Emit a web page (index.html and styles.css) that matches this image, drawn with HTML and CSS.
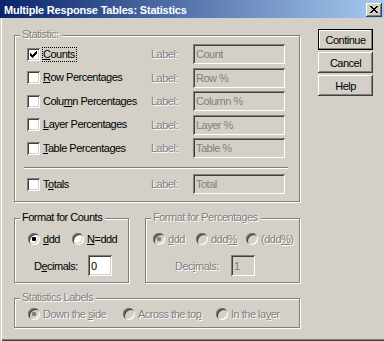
FILE: index.html
```html
<!DOCTYPE html>
<html>
<head>
<meta charset="utf-8">
<link rel="stylesheet" href="styles.css">
</head>
<body>
<div class="window">
  <div class="titlebar">
    <span class="title">Multiple Response Tables: Statistics</span>
    <span class="close"><svg width="8" height="7" viewBox="0 0 8 7" shape-rendering="crispEdges"><path d="M0 0h2v1H0zM6 0h2v1H6zM1 1h2v1H1zM5 1h2v1H5zM2 2h4v1H2zM3 3h2v1H3zM2 4h4v1H2zM1 5h2v1H1zM5 5h2v1H5zM0 6h2v1H0zM6 6h2v1H6z" fill="#000"/></svg></span>
  </div>
  <div class="client">
    <div class="left">
      <div class="group stat">
        <div class="legend dis">Statistic:</div>
        <div class="rows">
          <div class="row">
            <div class="check-cell"><span class="cb"><svg width="7" height="7" viewBox="0 0 7 7" shape-rendering="crispEdges"><path d="M6 0h1v1H6zM5 1h2v1H5zM0 2h1v1H0zM4 2h3v1H4zM0 3h2v1H0zM3 3h3v1H3zM0 4h5v1H0zM1 5h3v1H1zM2 6h1v1H2z" fill="#000"/></svg></span><span class="lbl focus"><u>C</u>ounts</span></div>
            <div class="dis">Label:</div>
            <div class="field">Count</div>
          </div>
          <div class="row">
            <div class="check-cell"><span class="cb"></span><span class="lbl"><u>R</u>ow Percentages</span></div>
            <div class="dis">Label:</div>
            <div class="field">Row %</div>
          </div>
          <div class="row">
            <div class="check-cell"><span class="cb"></span><span class="lbl">Colu<u>m</u>n Percentages</span></div>
            <div class="dis">Label:</div>
            <div class="field">Column %</div>
          </div>
          <div class="row">
            <div class="check-cell"><span class="cb"></span><span class="lbl"><u>L</u>ayer Percentages</span></div>
            <div class="dis">Label:</div>
            <div class="field">Layer %</div>
          </div>
          <div class="row">
            <div class="check-cell"><span class="cb"></span><span class="lbl"><u>T</u>able Percentages</span></div>
            <div class="dis">Label:</div>
            <div class="field">Table %</div>
          </div>
        </div>
        <div class="sep"></div>
        <div class="row totals">
          <div class="check-cell"><span class="cb"></span><span class="lbl">T<u>o</u>tals</span></div>
          <div class="dis">Label:</div>
          <div class="field">Total</div>
        </div>
      </div>

      <div class="formats">
        <div class="group counts">
          <div class="legend">Format for Counts</div>
          <div class="opts">
            <div class="opt w44"><span class="radio on"><span class="dot"></span></span><span><u>d</u>dd</span></div>
            <div class="opt"><span class="radio"></span><span><u>N</u>=ddd</span></div>
          </div>
          <div class="dec">
            <span class="dec-lbl w54">D<u>e</u>cimals:</span>
            <span class="edit">0</span>
          </div>
        </div>
        <div class="group pcts">
          <div class="legend dis">Format for Percentages</div>
          <div class="opts dis">
            <div class="opt w43"><span class="radio off"><span class="dot"></span></span><span><u>d</u>dd</span></div>
            <div class="opt w50"><span class="radio off"></span><span>ddd<u>%</u></span></div>
            <div class="opt"><span class="radio off"></span><span>(ddd<u>%</u>)</span></div>
          </div>
          <div class="dec dis">
            <span class="dec-lbl w56">Dec<u>i</u>mals:</span>
            <span class="edit disabled">1</span>
          </div>
        </div>
      </div>

      <div class="group labels">
        <div class="legend dis">Statistics Labels</div>
        <div class="opts dis">
          <div class="opt w95"><span class="radio off"><span class="dot"></span></span><span>Down the <u>s</u>ide</span></div>
          <div class="opt w93"><span class="radio off"></span><span>Across the to<u>p</u></span></div>
          <div class="opt"><span class="radio off"></span><span>In the la<u>y</u>er</span></div>
        </div>
      </div>
    </div>

    <div class="buttons">
      <div class="btn default">Continue</div>
      <div class="btn">Cancel</div>
      <div class="btn">Help</div>
    </div>
  </div>
</div>
</body>
</html>
```

FILE: styles.css
```css
* { box-sizing: border-box; margin: 0; padding: 0; }
body {
  margin: 0;
  background: #d4d0c8;
  font-family: "Liberation Sans", Arial, sans-serif;
  font-size: 11px;
  letter-spacing: -0.5px;
  color: #000;
}
.window {
  width: 384px;
  height: 341px;
  background: #d4d0c8;
  box-shadow: inset 1px 0 #d4d0c8, inset 2px 0 #fff, inset 0 -1px #404040, inset 0 -2px #808080;
  overflow: hidden;
}
.titlebar {
  height: 18px;
  display: flex;
  align-items: flex-start;
  justify-content: space-between;
  padding: 0 2px 0 4px;
  background: linear-gradient(to right, #0a246a, #a6caf0);
}
.title {
  color: #fff;
  font-weight: bold;
  letter-spacing: -0.2px;
  line-height: 13px;
  margin-top: 4px;
}
.close {
  width: 16px;
  height: 14px;
  margin-top: 3px;
  padding: 3px 0 0 4px;
  background: #d4d0c8;
  box-shadow: inset -1px -1px #404040, inset 1px 1px #fff, inset -2px -2px #808080;
}
.close svg, .cb svg { display: block; }

.client {
  display: flex;
  padding: 11px 0 0 14px;
}
.left {
  width: 286px;
  margin-top: 6px;
  display: flex;
  flex-direction: column;
}
.buttons {
  margin-left: 18px;
  display: flex;
  flex-direction: column;
  gap: 2px;
}
.btn {
  width: 55px;
  height: 21px;
  display: flex;
  align-items: center;
  justify-content: center;
  background: #d4d0c8;
  box-shadow: inset -1px -1px #404040, inset 1px 1px #fff, inset -2px -2px #808080;
}
.btn.default {
  border: 1px solid #000;
  box-shadow: inset -1px -1px #808080, inset 1px 1px #fff;
}

.group {
  border: 1px solid #808080;
  box-shadow: 1px 1px 0 #fff, inset 1px 1px 0 #fff;
  display: flex;
  flex-direction: column;
}
.legend {
  align-self: flex-start;
  margin: -8px 0 0 5px;
  padding: 0 3px 0 2px;
  line-height: 13px;
  background: #d4d0c8;
}
.dis {
  color: #808080;
  text-shadow: 1px 1px 0 #fff;
}

.stat { height: 167px; }
.rows {
  margin-top: 3px;
  padding-left: 12px;
  display: flex;
  flex-direction: column;
  gap: 3.5px;
}
.row {
  display: grid;
  grid-template-columns: 124px 42px 92px;
  height: 20px;
  align-items: center;
}
.check-cell {
  display: flex;
  align-items: center;
}
.cb {
  width: 13px;
  height: 13px;
  padding: 3px;
  background: #fff;
  box-shadow: inset 1px 1px #808080, inset -1px -1px #fff, inset 2px 2px #404040, inset -2px -2px #d4d0c8;
  flex: none;
}
.lbl {
  margin-left: 3px;
  line-height: 13px;
  white-space: nowrap;
}
.lbl.focus {
  margin-left: 2px;
  padding-right: 1px;
  border: 1px dotted #000;
  border-width: 1px 1px 1px 1px;
}
.field {
  height: 20px;
  padding-left: 3px;
  display: flex;
  align-items: center;
  color: #808080;
  box-shadow: inset 1px 1px #808080, inset -1px -1px #fff, inset 2px 2px #404040, inset -2px -2px #d4d0c8;
}
.sep {
  margin: 9px 0 0 9px;
  width: 264px;
  height: 2px;
  border-top: 1px solid #808080;
  border-bottom: 1px solid #fff;
}
.totals {
  margin: 5px 0 0 12px;
}

.formats {
  display: flex;
  gap: 16px;
  margin-top: 16px;
}
.counts { width: 115px; height: 65px; }
.pcts { width: 155px; height: 65px; }
.labels { height: 30px; margin-top: 15px; }

.opts {
  display: flex;
  align-items: center;
  height: 14px;
  margin-top: 8px;
  white-space: nowrap;
}
.counts .opts { padding-left: 13px; }
.pcts .opts { padding-left: 7px; }
.labels .opts { padding-left: 13px; margin-top: 3px; }
.opt {
  display: flex;
  align-items: center;
  gap: 3px;
  flex: none;
}
.w43 { width: 43px; }
.w44 { width: 44px; }
.w50 { width: 50px; }
.w54 { width: 54px; }
.w56 { width: 56px; }
.w93 { width: 93px; }
.w95 { width: 95px; }
.radio {
  width: 12px;
  height: 12px;
  border-radius: 50%;
  background: #fff;
  display: flex;
  align-items: center;
  justify-content: center;
  flex: none;
  box-shadow: inset 1px 1px #808080, inset -1px -1px #fff, inset 2px 2px #404040, inset -2px -2px #d4d0c8;
}
.radio.off { background: #d4d0c8; }
.dot {
  width: 4px;
  height: 4px;
  border-radius: 1px;
  background: #000;
}
.radio.off .dot { background: #808080; box-shadow: none; }
.opts.dis .radio { text-shadow: none; }

.dec {
  display: flex;
  align-items: center;
  margin-top: 9px;
}
.counts .dec { padding-left: 19px; }
.pcts .dec { padding-left: 29px; }
.dec-lbl { flex: none; white-space: nowrap; }
.edit {
  width: 24px;
  height: 21px;
  padding-left: 3px;
  display: flex;
  align-items: center;
  background: #fff;
  color: #000;
  text-shadow: none;
  box-shadow: inset 1px 1px #808080, inset -1px -1px #fff, inset 2px 2px #404040, inset -2px -2px #d4d0c8;
}
.edit.disabled {
  background: #d4d0c8;
  color: #808080;
}
```
